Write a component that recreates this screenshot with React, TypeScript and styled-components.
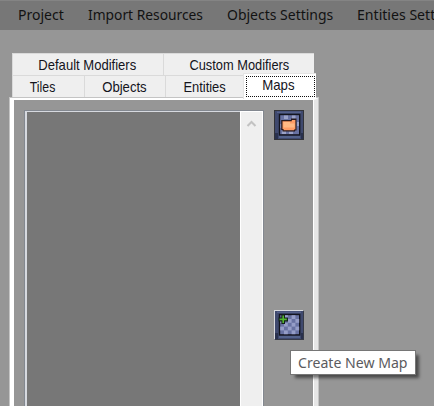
import React from "react";
import styled, { createGlobalStyle } from "styled-components";

const Global = createGlobalStyle`
  html, body { margin: 0; background: #969696; overflow: hidden; }
  #root { height: 100vh; }
  * { box-sizing: border-box; }
`;

const Window = styled.div`
  display: flex;
  flex-direction: column;
  height: 406px;
  width: 434px;
  overflow: hidden;
  background: #969696;
`;

const MenuBar = styled.nav`
  display: flex;
  gap: 24px;
  flex: none;
  height: 30px;
  padding-left: 18px;
  border-top: 1px solid #848484;
  background: #777777;
`;

const Fitted = styled.span<{ $size: number; $scale: number }>`
  display: block;
  flex: none;
  white-space: nowrap;
  font-size: ${(p) => p.$size}px;
  transform: scaleX(${(p) => p.$scale});
`;

const MenuItem = styled.div<{ $width: number }>`
  flex: none;
  width: ${(p) => p.$width}px;
  font-family: "Noto Sans", sans-serif;
  line-height: 27px;
  color: #121212;
  ${Fitted} { transform-origin: left; }
`;

const TabControl = styled.section`
  display: flex;
  flex-direction: column;
  flex: 1;
  min-height: 0;
  width: 309px;
  margin: 23px 0 0 9px;
`;

const TabRow = styled.div<{ $height: number }>`
  display: flex;
  flex: none;
  height: ${(p) => p.$height}px;
  margin-left: 3px;
`;

const Tab = styled.div<{ $width: number; $trail?: number }>`
  display: flex;
  justify-content: center;
  flex: none;
  width: ${(p) => p.$width}px;
  padding-right: ${(p) => p.$trail ?? 0}px;
  border: 1px solid #dadada;
  border-width: 1px 0 0 1px;
  background: #efefef;
  font-family: "Liberation Sans", Arial, sans-serif;
  line-height: 21px;
  color: #14141c;
`;

const ActiveTab = styled(Tab)`
  height: 26px;
  margin-top: -2px;
  padding: 2px 1px 2px 2px;
  border-color: #e4e4e4;
  background: #fff;
  position: relative;
`;

const Focus = styled.div`
  display: flex;
  justify-content: center;
  width: 100%;
  height: 21px;
  padding-right: 5px;
  line-height: 16px;
  border: 1px dotted #111;
`;

const Page = styled.div`
  display: flex;
  flex: 1;
  min-height: 0;
  border: solid #fff;
  border-width: 2px 0 0 4px;
  outline: 1px solid #c4c4c4;
  margin: 0 0 0 1px;
  padding: 10px 0 0 10px;
  border-right: 4px solid #e6e6e6;
  box-shadow: inset -1px 0 #fff;
`;

const List = styled.div`
  display: flex;
  flex: none;
  width: 240px;
  border: solid #838890;
  border-width: 1px 1px 0 1px;
  background: #777777;
  box-shadow: inset 2px 1px #d6d9df;
`;

const ScrollBar = styled.div`
  display: flex;
  justify-content: center;
  width: 23px;
  margin-left: auto;
  padding-top: 8px;
  border: solid #fff;
  border-width: 1px 1px 0;
  background: #efefef;
`;

const Tools = styled.div`
  display: flex;
  flex-direction: column;
  gap: 170px;
  margin-left: 10px;
`;

const ToolButton = styled.button<{ $raised?: boolean }>`
  display: block;
  width: 30px;
  height: 30px;
  padding: 0;
  border: 1px solid #323338;
  ${(p) => p.$raised && "border-color: #d9dade #383b47 #383b47 #d9dade;"}
  background: #485276;
  svg { display: block; }
`;

const Tooltip = styled.div`
  position: absolute;
  left: 290px;
  top: 350px;
  width: 126px;
  height: 25px;
  padding-left: 7px;
  border: 1px solid #767676;
  background: #fff;
  box-shadow: 4px 4px 3px -1px rgba(0, 0, 0, 0.5);
  font-family: "Noto Sans", sans-serif;
  line-height: 22px;
  color: #5b5b5e;
  ${Fitted} { transform-origin: left; }
`;

const checker = [0, 1, 2, 3, 4].flatMap((row) =>
  [0, 1, 2, 3, 4].filter((col) => (row + col) % 2 === 1).map((col) => ({ row, col })),
);

function Frame() {
  return (
    <>
      <path d="M0 0H28V28H0Z" fill="#3f496e" />
      <path d="M2 0.5H26V2H2Z" fill="#55618b" />
      <path d="M0 22H3V28H0ZM26 22H28V28H26Z" fill="#29314e" />
      <path d="M4 25H25V27H4Z" fill="#53628b" />
      <path d="M3.8 2.8H25.4V24.6H3.8Z" fill="#14151e" />
      <path d="M5.2 4.2H24V23.2H5.2Z" fill="#6872a2" />
    </>
  );
}

function FolderIcon() {
  return (
    <svg width="28" height="28" viewBox="0 0 28 28">
      <Frame />
      <path d="M9 4.5H13V8H9ZM17 4.5H20.5V8H17ZM5.5 13H7V17H5.5ZM7 19.5H11V23H7ZM14 20.5H18V23H14ZM22 11H24V15H22Z" fill="#9ba2c7" />
      <path d="M6.2 9H16V7.5H21.5V19.5H20V20.5H7.5V19H6.2Z" fill="#27191c" />
      <path d="M7.5 10.2H16.8V9H20.4V18.5H19V19.3H8.6V18H7.5Z" fill="#ff9d66" />
      <path d="M8.5 11H15V12.5H19.5V16.5H8.5Z" fill="#ffb984" />
    </svg>
  );
}

function NewMapIcon() {
  return (
    <svg width="28" height="28" viewBox="0 0 28 28">
      <Frame />
      {checker.map(({ row, col }) => (
        <rect key={`${row}-${col}`} x={5.2 + col * 3.8} y={4.2 + row * 3.8} width={3.8} height={3.8} fill="#959dc7" />
      ))}
      <path d="M6.4 3.6H10V6.4H13V10.4H10V13H6.4V10.4H3.6V6.4H6.4Z" fill="#13221a" />
      <path d="M7.4 4.6H9V7.4H11.8V9.2H9V12H7.4V9.2H4.6V7.4H7.4Z" fill="#52b52f" />
    </svg>
  );
}

const menus = [
  { label: "Project", width: 46, scale: 0.935 },
  { label: "Import Resources", width: 115, scale: 0.92 },
  { label: "Objects Settings", width: 106, scale: 0.932 },
  { label: "Entities Settings", width: 110, scale: 0.94 },
];

export default function App() {
  return (
    <>
      <Global />
      <Window>
        <MenuBar>
          {menus.map((m) => (
            <MenuItem key={m.label} $width={m.width}>
              <Fitted $size={15} $scale={m.scale}>{m.label}</Fitted>
            </MenuItem>
          ))}
        </MenuBar>
        <TabControl>
          <TabRow $height={22}>
            <Tab $width={151} $trail={2}><Fitted $size={15} $scale={0.87}>Default Modifiers</Fitted></Tab>
            <Tab $width={151} $trail={0}><Fitted $size={15} $scale={0.855}>Custom Modifiers</Fitted></Tab>
          </TabRow>
          <TabRow $height={23}>
            <Tab $width={72} $trail={11}><Fitted $size={15} $scale={0.82}>Tiles</Fitted></Tab>
            <Tab $width={81} $trail={1}><Fitted $size={15} $scale={0.875}>Objects</Fitted></Tab>
            <Tab $width={78}><Fitted $size={15} $scale={0.86}>Entities</Fitted></Tab>
            <ActiveTab $width={73}><Focus><Fitted $size={15} $scale={0.88}>Maps</Fitted></Focus></ActiveTab>
          </TabRow>
          <Page>
            <List>
              <ScrollBar>
                <svg width="11" height="8" viewBox="0 0 11 8"><path d="M1.5 6L5.5 2L9.5 6" fill="none" stroke="#c2c2c2" strokeWidth="2" /></svg>
              </ScrollBar>
            </List>
            <Tools>
              <ToolButton aria-label="Open map"><FolderIcon /></ToolButton>
              <ToolButton $raised aria-label="Create New Map"><NewMapIcon /></ToolButton>
            </Tools>
          </Page>
        </TabControl>
        <Tooltip><Fitted $size={15} $scale={0.94}>Create New Map</Fitted></Tooltip>
      </Window>
    </>
  );
}
